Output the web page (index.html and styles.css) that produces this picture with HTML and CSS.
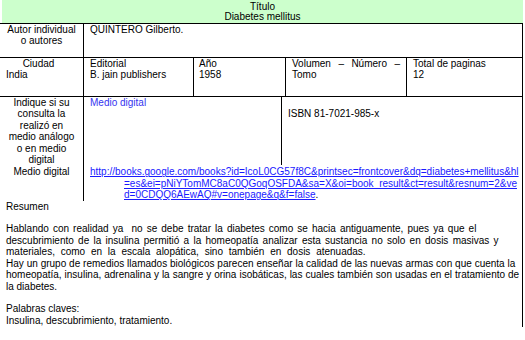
FILE: index.html
```html
<!DOCTYPE html>
<html lang="es">
<head>
<meta charset="utf-8">
<title>Diabetes mellitus</title>
<link rel="stylesheet" href="styles.css">
</head>
<body>
<div class="sheet">
  <div class="title">
    <div>Título</div>
    <div>Diabetes mellitus</div>
  </div>

  <div class="row row-author">
    <div class="cell label">Autor individual<br>o autores</div>
    <div class="cell">QUINTERO Gilberto.</div>
  </div>

  <div class="row row-pub">
    <div class="cell">
      <div class="center">Ciudad</div>
      <div>India</div>
    </div>
    <div class="cell">Editorial<br>B. jain publishers</div>
    <div class="cell">Año<br>1958</div>
    <div class="cell justify">Volumen – Número – Tomo</div>
    <div class="cell">Total de paginas<br>12</div>
  </div>

  <div class="row row-media">
    <div class="cell label">Indique si su<br>consulta la<br>realizó en<br>medio análogo<br>o en medio<br>digital</div>
    <div class="cell medium">Medio digital</div>
    <div class="cell isbn"><br>ISBN 81-7021-985-x</div>
    <div class="cell label">Medio digital</div>
    <div class="cell url"><a href="#">http://books.google.com/books?id=IcoL0CG57f8C&amp;printsec=frontcover&amp;dq=diabetes+mellitus&amp;hl<br>=es&amp;ei=pNiYTomMC8aC0QGoqOSFDA&amp;sa=X&amp;oi=book_result&amp;ct=result&amp;resnum=2&amp;ve<br>d=0CDQQ6AEwAQ#v=onepage&amp;q&amp;f=false</a>.</div>
  </div>

  <div class="summary">
    <p>Resumen</p>
    <p class="blank">&nbsp;</p>
    <p><span class="line l1">Hablando con realidad ya&nbsp; no se debe tratar la diabetes como se hacia antiguamente, pues ya que el</span><br><span class="line l2">descubrimiento de la insulina permitió a la homeopatía analizar esta sustancia no solo en dosis masivas y</span><br><span class="line l3">materiales, como en la escala alopática, sino también en dosis atenuadas.</span></p>
    <p><span class="line l4">Hay un grupo de remedios llamados biológicos parecen enseñar la calidad de las nuevas armas con que cuenta la</span><br><span class="line l5">homeopatía, insulina, adrenalina y la sangre y orina isobáticas, las cuales también son usadas en el tratamiento de</span><br><span class="line">la diabetes.</span></p>
    <p class="blank">&nbsp;</p>
    <p>Palabras claves:</p>
    <p>Insulina, descubrimiento, tratamiento.</p>
  </div>
</div>
</body>
</html>
```

FILE: styles.css
```css
* { box-sizing: border-box; }

html, body {
  margin: 0;
  padding: 0;
  background: #ffffff;
}

body {
  font-family: "Liberation Sans", Arial, sans-serif;
  font-size: 10px;
  line-height: 11.4px;
  color: #000000;
}

.sheet {
  width: 523px;
}

.title {
  margin-left: 2px;
  height: 23px;
  padding-top: 2px;
  background: #ccffcc;
  text-align: center;
  line-height: 10px;
}

.row {
  display: grid;
  border-top: 1px solid #000;
  border-right: 1px solid #000;
}

.row-author {
  grid-template-columns: 83px 1fr;
  height: 34px;
}

.row-pub {
  grid-template-columns: 83px 110px 92px 121px 1fr;
  height: 40px;
  border-bottom: 1px solid #000;
}

.row-media {
  grid-template-columns: 83px 198px 1fr;
  border-top: 0;
}

.cell {
  padding: 0 6px;
}

.cell + .cell {
  border-left: 1px solid #000;
}

.row-pub .cell:nth-child(3) {
  padding-left: 5px;
}

.label {
  text-align: center;
  padding: 0;
}

.row-media .label {
  border-left: 0;
}

.row-media .label:nth-child(4) {
  padding-top: 1px;
}

.center {
  text-align: center;
  margin-left: -6px;
}

.justify {
  text-align: justify;
}

.medium {
  color: #3535f0;
}

.isbn {
  border-left: 1px solid #000;
}

.url {
  grid-column: 2 / 4;
  border-left: 1px solid #000;
  padding-left: 40px;
  text-indent: -34px;
  padding-top: 1px;
  white-space: nowrap;
}

.url a {
  color: #1a1aff;
  text-decoration: underline;
}

.summary {
  border-right: 1px solid #000;
  padding: 0 6px 1px 6px;
  white-space: nowrap;
}

.summary p {
  margin: 0;
}

.summary .l1 { word-spacing: 1.3px; }
.summary .l2 { word-spacing: 1.5px; }
.summary .l3 { word-spacing: 3px; }
.summary .l4 { word-spacing: 0.1px; }
.summary .l5 { word-spacing: 0.2px; }
```
